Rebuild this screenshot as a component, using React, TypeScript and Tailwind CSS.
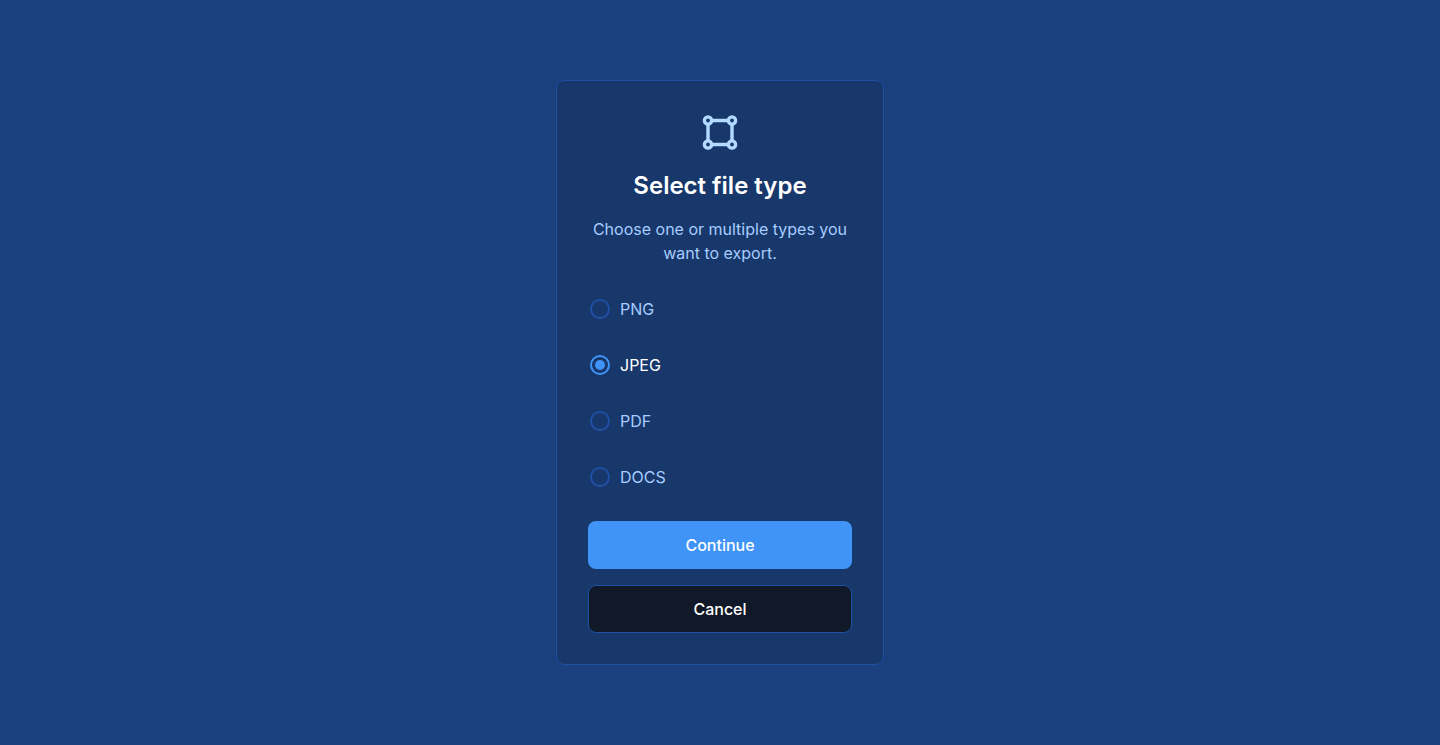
import { useState } from 'react';

const types = ['PNG', 'JPEG', 'PDF', 'DOCS'];

function BoundsIcon() {
  return (
    <svg width="40" height="40" viewBox="0 0.5 40 40" className="shrink-0" fill="none" stroke="#b3dbff" strokeWidth="3.4">
      <circle cx="8" cy="8" r="3.6" />
      <circle cx="32" cy="8" r="3.6" />
      <circle cx="8" cy="32" r="3.6" />
      <circle cx="32" cy="32" r="3.6" />
      <path d="M11.5 8h17M11.5 32h17M8 11.5v17M32 11.5v17" />
    </svg>
  );
}

export default function App() {
  const [selected, setSelected] = useState('JPEG');
  return (
    <main className="flex h-[745px] items-center justify-center bg-[#1a407d] font-['Inter',sans-serif]">
      <section className="flex h-[585px] w-[328px] flex-col items-center rounded-lg border border-[#1e4fa3] bg-[#18376b] px-[31px] pt-8">
        <BoundsIcon />
        <h1 className="mt-[17px] text-2xl leading-8 font-semibold text-white">Select file type</h1>
        <p className="mt-[15px] text-center text-base leading-6 text-[#a6cdff]">
          Choose one or multiple types you want to export.
        </p>
        <div role="radiogroup" className="mt-4 w-full">
          {types.map((type) => (
            <button
              key={type}
              type="button"
              role="radio"
              aria-checked={selected === type}
              onClick={() => setSelected(type)}
              className="flex h-14 w-full items-center gap-2.5 pl-0.5 text-base"
            >
              <span className={`flex size-5 items-center justify-center rounded-full border-2 ${selected === type ? 'border-[#4094f7]' : 'border-[#1e50a3]'}`}>
                {selected === type && <span className="size-2.5 rounded-full bg-[#4094f7]" />}
              </span>
              <span className={selected === type ? 'text-white' : 'text-[#a6cdff]'}>{type}</span>
            </button>
          ))}
        </div>
        <button type="button" className="mt-4 h-12 w-full shrink-0 rounded-lg bg-[#4094f7] text-base font-medium text-white">
          Continue
        </button>
        <button type="button" className="mt-4 h-12 w-full shrink-0 rounded-lg border border-[#1e50a3] bg-[#111827] text-base font-medium text-white">
          Cancel
        </button>
      </section>
    </main>
  );
}
